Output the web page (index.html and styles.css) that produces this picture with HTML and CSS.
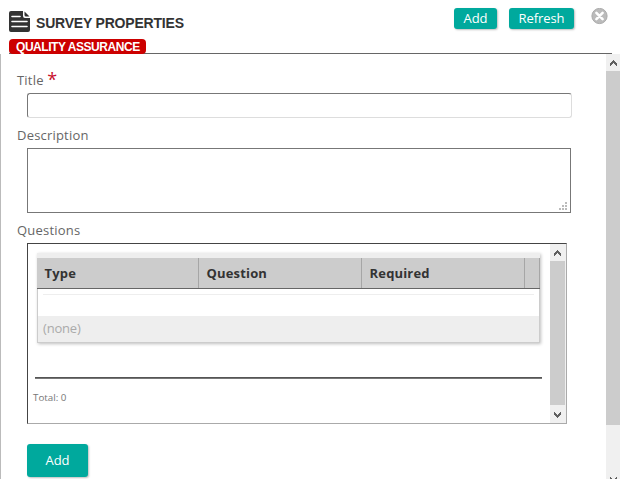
FILE: index.html
```
<!DOCTYPE html>
<html lang="en">
<head>
    <meta charset="UTF-8">
    <meta name="viewport" content="width=device-width, initial-scale=1.0">
    <title>Survey Properties</title>
    <link rel="stylesheet" href="styles.css">
</head>
<body>
    <div class="header">
        <div class="heading">
            <div class="title">
                <svg class="doc-icon" width="22" height="22" viewBox="0 0 22 22">
                    <path fill="#333" d="M2 0H14V5Q14 7 16 7H21V19Q21 21 19 21H2Q0 21 0 19V2Q0 0 2 0Z"/>
                    <path fill="#333" d="M15.5 0.5L20.5 5.5H17Q15.5 5.5 15.5 4Z"/>
                    <path stroke="#fff" stroke-width="1.6" stroke-linecap="round" d="M3 5.5H11M3 10.5H18M3 15.5H18"/>
                </svg>
                <h1>SURVEY PROPERTIES</h1>
            </div>
            <span class="badge">QUALITY ASSURANCE</span>
        </div>
        <div class="actions">
            <button class="btn">Add</button>
            <button class="btn btn-refresh">Refresh</button>
            <svg class="close" width="17" height="17" viewBox="0 0 17 17">
                <circle cx="8.5" cy="8" r="7.6" fill="#bbb" stroke="#aaa"/>
                <path stroke="#fff" stroke-width="2.6" stroke-linecap="round" d="M5.4 4.9L11.6 11.1M11.6 4.9L5.4 11.1"/>
            </svg>
        </div>
    </div>

    <div class="panel">
        <div class="form">
            <label class="label-title" for="title">Title <span class="required">*</span></label>
            <input id="title" class="input" type="text">

            <label class="label-description" for="description">Description</label>
            <div class="textarea" id="description">
                <svg width="8" height="8" viewBox="0 0 8 8" fill="#bbb">
                    <path d="M6 0h2v2h-2zM3 3h2v2h-2zM6 3h2v2h-2zM0 6h2v2h-2zM3 6h2v2h-2zM6 6h2v2h-2z"/>
                </svg>
            </div>

            <label class="label-questions">Questions</label>
            <div class="questions">
                <div class="questions-content">
                    <div class="grid">
                        <div class="grid-head">
                            <div>Type</div>
                            <div>Question</div>
                            <div>Required</div>
                            <div></div>
                        </div>
                        <div class="grid-body">
                            <div class="grid-line"></div>
                            <div class="grid-empty">(none)</div>
                        </div>
                    </div>
                    <div class="rule"></div>
                    <div class="total">Total: 0</div>
                </div>
                <div class="scrollbar">
                    <svg class="arrow" width="7" height="6" viewBox="0 0 7 6"><path d="M3 0h1v1h1v1h1v1h1v3h-1v-1h-1v-1h-1v-1h-1v1h-1v1h-1v1h-1v-3h1v-1h1v-1h1z"/></svg>
                    <div class="thumb"></div>
                    <svg class="arrow" width="7" height="6" viewBox="0 0 7 6"><path d="M0 0h1v1h1v1h1v1h1v-1h1v-1h1v-1h1v3h-1v1h-1v1h-1v1h-1v-1h-1v-1h-1v-1h-1z"/></svg>
                </div>
            </div>

            <button class="btn btn-large">Add</button>
        </div>
        <div class="scrollbar page-scroll">
            <svg class="arrow" width="7" height="6" viewBox="0 0 7 6"><path d="M3 0h1v1h1v1h1v1h1v3h-1v-1h-1v-1h-1v-1h-1v1h-1v1h-1v1h-1v-3h1v-1h1v-1h1z"/></svg>
            <div class="thumb"></div>
            <svg class="arrow" width="7" height="6" viewBox="0 0 7 6"><path d="M0 0h1v1h1v1h1v1h1v-1h1v-1h1v-1h1v3h-1v1h-1v1h-1v1h-1v-1h-1v-1h-1v-1h-1z"/></svg>
        </div>
    </div>
</body>
</html>
```

FILE: styles.css
```
* {
    box-sizing: border-box;
}

body {
    margin: 0;
    height: 481px;
    overflow: hidden;
    background-color: #fff;
    color: #666;
    font-family: 'Open Sans', sans-serif;
    font-size: 13px;
}

.header {
    display: flex;
    justify-content: space-between;
    height: 54px;
    margin: 0 8px 0 9px;
    border-bottom: 1px solid #666;
}

.heading {
    padding-top: 11px;
}

.title {
    display: flex;
    height: 28px;
}

h1 {
    margin: 3px 0 0 5px;
    color: #333;
    font: bold 14px/18px 'Liberation Sans', Arial, sans-serif;
    letter-spacing: -0.2px;
}

.badge {
    display: block;
    width: 137px;
    height: 15px;
    padding-left: 7px;
    border-radius: 4px;
    background-color: #c00;
    color: #fff;
    font: bold 12px/16px 'Liberation Sans', Arial, sans-serif;
    letter-spacing: -0.45px;
    white-space: nowrap;
}

.actions {
    display: flex;
    align-items: flex-start;
    padding: 8px 4px 0 0;
}

.btn {
    width: 43px;
    height: 21px;
    padding: 0;
    border: none;
    border-radius: 3px;
    background-color: #00a99d;
    box-shadow: 1px 1px 2px rgba(0,0,0,0.25);
    color: #fff;
    font: 13px/21px 'Open Sans', sans-serif;
}

.btn-refresh {
    width: 65px;
    margin-left: 12px;
    letter-spacing: -0.1px;
}

.close {
    margin-left: 17px;
}

.panel {
    display: flex;
    height: 425px;
    overflow: hidden;
    border-left: 1px solid #bbb;
}

.form {
    flex: 1;
    padding-left: 26px;
}

label {
    display: block;
    height: 20px;
    margin-left: -10px;
    letter-spacing: 0.2px;
    line-height: 20px;
}

.label-title {
    margin-top: 16px;
}

.required {
    color: #c8102e;
    font-size: 18px;
    line-height: 10px;
    vertical-align: -1px;
}

.input {
    display: block;
    width: 545px;
    height: 25px;
    margin-top: 3px;
    border: 1px solid #ddd;
    border-top-color: #777;
    border-left-color: #777;
    border-radius: 3px;
    outline: none;
}

.label-description {
    margin-top: 7px;
}

.textarea {
    display: flex;
    justify-content: flex-end;
    align-items: flex-end;
    width: 544px;
    height: 65px;
    margin-top: 3px;
    padding: 0 3px 2px 0;
    border: 1px solid #777;
}

.label-questions {
    margin-top: 7px;
}

.questions {
    display: flex;
    width: 540px;
    height: 181px;
    margin-top: 3px;
    border: 1px solid #aaa;
    border-top-color: #444;
    border-left-color: #444;
}

.questions-content {
    flex: 1;
    padding-top: 9px;
}

.grid {
    width: 503px;
    height: 90px;
    margin-left: 9px;
    border-top: 5px solid #eee;
    box-shadow: 1px 1px 3px rgba(0,0,0,0.25);
}

.grid-head {
    display: grid;
    grid-template-columns: 162px 163px 163px 15px;
    height: 31px;
    border-bottom: 1px solid #666;
    background-color: #ccc;
    color: #333;
    font-weight: bold;
    letter-spacing: 0.15px;
    line-height: 30px;
}

.grid-head div {
    padding-left: 7.6px;
    border-right: 1px solid #a6a6a6;
}

.grid-body {
    height: 54px;
    padding-top: 5px;
    border: 1px solid #ccc;
    border-top: none;
}

.grid-line {
    height: 1px;
    margin: 0 5px;
    background-color: #eee;
}

.grid-empty {
    height: 26px;
    margin-top: 21px;
    padding-left: 5px;
    background-color: #eee;
    color: #aaa;
    letter-spacing: -0.2px;
    line-height: 24px;
}

.rule {
    width: 507px;
    height: 2px;
    margin: 34px 0 0 7px;
    border-top: 1px solid #555;
    border-bottom: 1px solid #777;
}

.total {
    margin: 12px 0 0 5px;
    color: #777;
    font-size: 9.8px;
    line-height: 14px;
}

.scrollbar {
    display: flex;
    flex-direction: column;
    align-items: center;
    width: 16px;
    padding: 6px 1px 0 0;
    background-color: #f0f0f0;
}

.arrow {
    flex: none;
    fill: #606060;
}

.thumb {
    flex: none;
    width: 15px;
    height: 144px;
    margin: 5px 0 7px;
    background-color: #ccc;
}

.page-scroll {
    width: 14px;
    padding-right: 0;
}

.page-scroll .thumb {
    width: 14px;
    height: 354px;
    margin-bottom: 52px;
}

.btn-large {
    display: block;
    width: 61px;
    height: 33px;
    margin-top: 20px;
    padding-bottom: 1px;
}
```
